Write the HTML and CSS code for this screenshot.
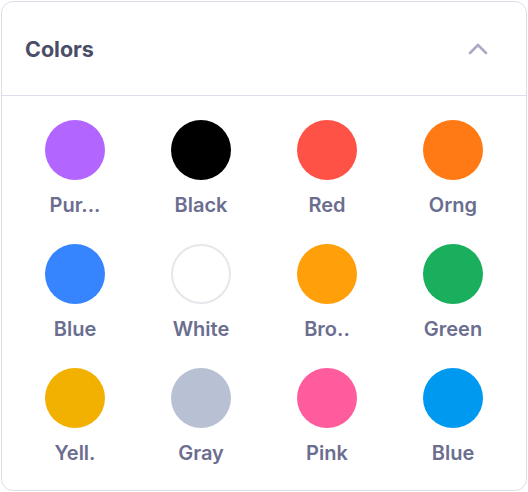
FILE: index.html
```html
<!DOCTYPE html>
<html>
<head>
<meta charset="utf-8">
<link rel="stylesheet" href="styles.css">
</head>
<body>
<div class="card">
  <div class="header">
    <h2 class="title">Colors</h2>
    <svg class="chevron" width="20" height="12" viewBox="0 0 20 12"><path d="M2 10 L10 2 L18 10" fill="none" stroke="currentColor" stroke-width="2.6" stroke-linecap="round" stroke-linejoin="round"/></svg>
  </div>
  <div class="grid">
    <div class="item"><span class="dot purple"></span><span class="label">Pur...</span></div>
    <div class="item"><span class="dot black"></span><span class="label">Black</span></div>
    <div class="item"><span class="dot red"></span><span class="label">Red</span></div>
    <div class="item"><span class="dot orange"></span><span class="label">Orng</span></div>
    <div class="item"><span class="dot blue"></span><span class="label">Blue</span></div>
    <div class="item"><span class="dot white"></span><span class="label">White</span></div>
    <div class="item"><span class="dot amber"></span><span class="label">Bro..</span></div>
    <div class="item"><span class="dot green"></span><span class="label">Green</span></div>
    <div class="item"><span class="dot yellow"></span><span class="label">Yell.</span></div>
    <div class="item"><span class="dot gray"></span><span class="label">Gray</span></div>
    <div class="item"><span class="dot pink"></span><span class="label">Pink</span></div>
    <div class="item"><span class="dot sky"></span><span class="label">Blue</span></div>
  </div>
</div>
</body>
</html>
```
FILE: styles.css
```css
* { box-sizing: border-box; }
html, body { margin: 0; padding: 0; background: #ffffff; }
body {
  font-family: Inter, "Noto Sans", "Liberation Sans", sans-serif;
  padding: 1px;
}
.card {
  width: 526px;
  height: 490px;
  border: 1.5px solid #dcdfea;
  border-radius: 12px;
  background: #fff;
  overflow: hidden;
}
.header {
  height: 94px;
  display: flex;
  align-items: center;
  justify-content: space-between;
  padding: 0 38px 0 23px;
  border-bottom: 1.5px solid #dcdfea;
}
.title {
  margin: 0;
  font-size: 21.5px;
  font-weight: 700;
  color: #4a4d68;
}
.chevron { color: #a9abc4; display: block; }
.grid {
  display: grid;
  grid-template-columns: repeat(4, 126px);
  row-gap: 27px;
  padding: 24px 10px 24px 10px;
}
.item {
  display: flex;
  flex-direction: column;
  align-items: center;
}
.dot {
  width: 60px;
  height: 60px;
  border-radius: 50%;
  display: block;
}
.label {
  margin-top: 13px;
  font-size: 20px;
  line-height: 24px;
  font-weight: 600;
  color: #6b6e8f;
}
.purple { background: #b266ff; }
.black { background: #000000; }
.red { background: #ff5247; }
.orange { background: #ff7a15; }
.blue { background: #3685ff; }
.white { background: #fff; border: 2px solid #e6e6eb; }
.amber { background: #ff9f0a; }
.green { background: #1aaf5d; }
.yellow { background: #f2b000; }
.gray { background: #b8c0d4; }
.pink { background: #ff5c9d; }
.sky { background: #0099f0; }
```
